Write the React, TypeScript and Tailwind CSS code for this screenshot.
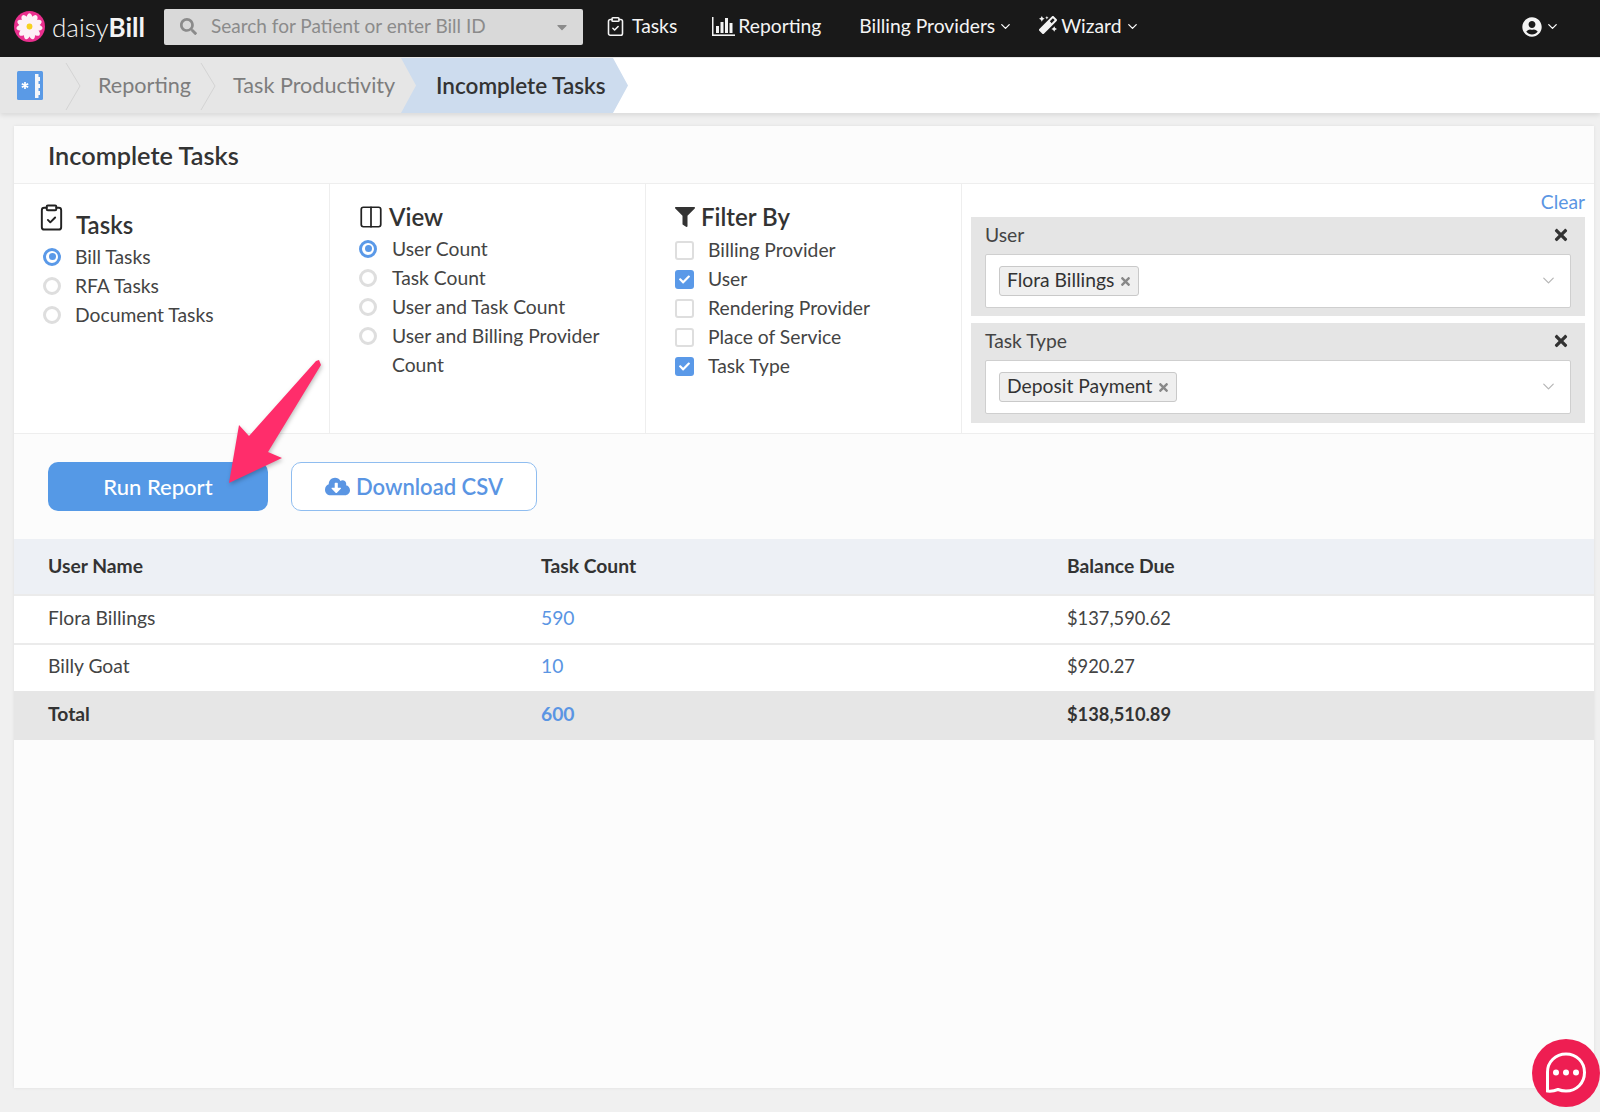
import React from "react";
import { ChevronDown, ClipboardCheck, Columns2 } from "lucide-react";
import { FaSearch, FaFilter, FaTimes, FaCloudDownloadAlt, FaCheck, FaMagic, FaUserCircle, FaCaretDown } from "react-icons/fa";

function Flower({ size = 32 }: { size?: number }) {
  const petals = Array.from({ length: 11 }, (_, i) => (i * 360) / 11);
  return (
    <svg width={size} height={size} viewBox="0 0 32 32">
      <circle cx="16" cy="16" r="16" fill="#ea2f8e" />
      {petals.map((a) => (
        <ellipse key={a} cx="16" cy="8" rx="3.200" ry="5.600" fill="#fdf1f6" transform={`rotate(${a} 16 16)`} />
      ))}
      <circle cx="16" cy="16" r="3" fill="#f6d21f" />
    </svg>
  );
}

function NavChevron() {
  return <ChevronDown size={15} strokeWidth={2} className="text-white" />;
}

function ReportIcon() {
  return (
    <svg width="23" height="19" viewBox="0 0 23 19" fill="#f4f4f4">
      <rect x="0" y="0" width="1.500" height="19" />
      <rect x="0" y="17.400" width="23" height="1.600" />
      <rect x="4" y="9" width="3" height="7" />
      <rect x="8.500" y="5" width="3" height="11" />
      <rect x="13" y="1" width="3" height="15" />
      <rect x="17.500" y="6" width="3" height="10" />
    </svg>
  );
}

function HomeIcon() {
  return (
    <svg width="26" height="29" viewBox="0 0 26 29">
      <rect width="26" height="29" rx="1.500" fill="#5a9ae6" />
      <path d="M18 3h3.500v3h1.500v4h-1.500v3h1.500v4h-1.500v3h1.500v4h-1.500v3H18z" fill="#f4f6fa" />
      <path d="M8 11v7M4.800 12.700l6.400 3.600M11.200 12.700l-6.400 3.600" stroke="#fff" strokeWidth="1.700" />
    </svg>
  );
}

function CrumbSep() {
  return (
    <svg width="16" height="56" viewBox="0 0 16 56" fill="none" className="shrink-0">
      <path d="M1 5 L15 28 L1 52" stroke="#d4d4d4" strokeWidth="1" />
    </svg>
  );
}

function Radio({ on }: { on?: boolean }) {
  return on ? (
    <span className="w-[18px] h-[18px] shrink-0 rounded-full border-[3px] border-[#5a99e8] bg-white flex items-center justify-center">
      <span className="w-[7px] h-[7px] rounded-full bg-[#5a99e8]" />
    </span>
  ) : (
    <span className="w-[18px] h-[18px] shrink-0 rounded-full border-[3px] border-[#dedede] bg-white" />
  );
}

function Check({ on }: { on?: boolean }) {
  return on ? (
    <span className="w-[19px] h-[19px] shrink-0 rounded-[3px] bg-[#5a99e8] flex items-center justify-center">
      <FaCheck size={11} className="text-white" />
    </span>
  ) : (
    <span className="w-[19px] h-[19px] shrink-0 rounded-[3px] border-2 border-[#dedede] bg-white" />
  );
}

function RadioRow({ label, on, gap }: { label: string; on?: boolean; gap: string }) {
  return (
    <div className={`flex items-start ${gap} leading-[29px] text-[19.300px] text-[#444]`}>
      <span className="h-[29px] flex items-center">
        <Radio on={on} />
      </span>
      <span>{label}</span>
    </div>
  );
}

function CheckRow({ label, on }: { label: string; on?: boolean }) {
  return (
    <div className="flex items-center gap-[14px] h-[29px] text-[19.300px] text-[#444]">
      <Check on={on} />
      <span className="-mt-[1px]">{label}</span>
    </div>
  );
}

function FilterPanel({ label, tag, cls, selCls }: { label: string; tag: string; cls: string; selCls: string }) {
  return (
    <div className={`bg-[#e5e5e5] pl-[14px] pr-[14px] ${cls}`}>
      <div className="flex items-center justify-between h-[36.500px] pr-[1px]">
        <span className="text-[19.300px] text-[#444]">{label}</span>
        <FaTimes size={18} className="text-[#333]" />
      </div>
      <div className={`bg-white border border-[#cfcfcf] rounded-[2px] flex items-center justify-between pl-[13px] pr-[12px] ${selCls}`}>
        <span className="h-[30px] inline-flex items-center gap-[5px] pl-[7px] pr-[6px] rounded-[3px] border border-[#c9c9c9] bg-[#efefef] text-[19.300px] text-[#333]">
          {tag}
          <FaTimes size={13} className="text-[#888] mt-[2px]" />
        </span>
        <ChevronDown size={19} strokeWidth={1.500} className="text-[#b5b5b5]" />
      </div>
    </div>
  );
}

function TableRow({ a, b, c, cls, cCls }: { a: string; b: string; c: string; cls: string; cCls?: string }) {
  return (
    <div className={`grid grid-cols-[493px_526px_1fr] items-center pl-[34px] text-[19.300px] ${cls}`}>
      <span>{a}</span>
      <span className={b === "Task Count" ? "" : "text-[#5a95e3]"}>{b}</span>
      <span className={cCls}>{c}</span>
    </div>
  );
}

export default function App() {
  return (
    <div className="relative w-[1600px] h-[1112px] overflow-hidden bg-[#f0f0f0] [font-family:Lato,'Liberation_Sans',sans-serif] text-[#333]">
      {/* top nav */}
      <nav className="h-[57px] bg-[#191919] flex items-center pb-[4px] text-[#f4f4f4] text-[19.300px]">
        <div className="ml-[14px] flex items-center">
          <Flower size={31} />
          <span className="ml-[7px] text-[26px] font-light leading-none">
            daisy<span className="font-bold">Bill</span>
          </span>
        </div>
        <div className="ml-[19px] w-[419px] h-[36px] rounded-[2px] bg-[#d9d9d9] flex items-center pl-[16px] pr-[13px] text-[#8b8b8b]">
          <FaSearch size={17} className="text-[#8b8b8b]" />
          <span className="ml-[14px] flex-1 text-[19px]">Search for Patient or enter Bill ID</span>
          <FaCaretDown size={16} className="text-[#8b8b8b]" />
        </div>
        <div className="ml-[22px] flex items-center gap-[6px]">
          <ClipboardCheck size={21} strokeWidth={1.800} />
          <span>Tasks</span>
        </div>
        <div className="ml-[35px] flex items-center gap-[3px]">
          <ReportIcon />
          <span>Reporting</span>
        </div>
        <div className="ml-[38px] flex items-center gap-[3px]">
          <span>Billing Providers</span>
          <NavChevron />
        </div>
        <div className="ml-[26px] flex items-center gap-[4px]">
          <FaMagic size={18} className="mb-[3px]" />
          <span>Wizard</span>
          <NavChevron />
        </div>
        <div className="ml-auto mr-[40px] flex items-center gap-[3px]">
          <FaUserCircle size={20} />
          <NavChevron />
        </div>
      </nav>

      {/* breadcrumb */}
      <div className="h-[56px] bg-white flex shadow-[0_2px_5px_rgba(0,0,0,0.1)] relative border-t border-[#e8e8e8]">
        <div className="w-[418px] bg-[#e6e6e6] flex items-center text-[21.600px] text-[#7d7d7d]">
          <span className="ml-[17px]"><HomeIcon /></span>
          <span className="ml-[22px]"><CrumbSep /></span>
          <span className="ml-[17px]">Reporting</span>
          <span className="ml-[9px]"><CrumbSep /></span>
          <span className="ml-[17px]">Task Productivity</span>
        </div>
        <div className="-ml-[17px] w-[227px] bg-[#cddcee] [clip-path:polygon(0_0,212px_0,227px_50%,212px_100%,0_100%,15px_50%)] flex items-center pl-[35px] text-[22.500px] font-semibold text-[#333] whitespace-nowrap">
          Incomplete Tasks
        </div>
      </div>

      {/* panel */}
      <main className="ml-[14px] mr-[6px] mt-[13px] h-[962px] bg-[#fcfcfc] shadow-[0_0_3px_rgba(0,0,0,0.08)] flex flex-col">
        <div className="h-[58px] flex items-center pl-[34px] pt-[2px] text-[25.300px] font-semibold text-[#333] border-b border-[#eeeeee]">
          Incomplete Tasks
        </div>

        <div className="h-[250px] flex border-b border-[#eeeeee] bg-white">
          <div className="w-[316px] border-r border-[#eeeeee] pl-[29px] pt-[19px]">
            <div className="flex items-start gap-[10px] h-[39px] -ml-[6px]">
              <ClipboardCheck size={29} strokeWidth={1.600} className="text-[#222]" />
              <span className="text-[24px] font-semibold mt-[4px]">Tasks</span>
            </div>
            <RadioRow label="Bill Tasks" on gap="gap-[14px]" />
            <RadioRow label="RFA Tasks" gap="gap-[14px]" />
            <RadioRow label="Document Tasks" gap="gap-[14px]" />
          </div>

          <div className="w-[316px] border-r border-[#eeeeee] pl-[29px] pr-[30px] pt-[15px]">
            <div className="flex items-center gap-[5px] h-[35px] -ml-[1px]">
              <Columns2 size={26} strokeWidth={1.600} className="text-[#222]" />
              <span className="text-[24px] font-semibold">View</span>
            </div>
            <RadioRow label="User Count" on gap="gap-[15px]" />
            <RadioRow label="Task Count" gap="gap-[15px]" />
            <RadioRow label="User and Task Count" gap="gap-[15px]" />
            <RadioRow label="User and Billing Provider Count" gap="gap-[15px]" />
          </div>

          <div className="w-[316px] border-r border-[#eeeeee] pl-[29px] pt-[14px]">
            <div className="flex items-center gap-[6px] h-[38px]">
              <FaFilter size={20} className="text-[#333]" />
              <span className="text-[24px] font-semibold">Filter By</span>
            </div>
            <CheckRow label="Billing Provider" />
            <CheckRow label="User" on />
            <CheckRow label="Rendering Provider" />
            <CheckRow label="Place of Service" />
            <CheckRow label="Task Type" on />
          </div>

          <div className="flex-1 pl-[9px] pr-[9px] flex flex-col">
            <div className="h-[33px] pt-[3px] flex items-center justify-end text-[19.300px] text-[#5a95e3]">Clear</div>
            <FilterPanel label="User" tag="Flora Billings" cls="h-[99px]" selCls="h-[54px]" />
            <FilterPanel label="Task Type" tag="Deposit Payment" cls="h-[100px] mt-[7px]" selCls="h-[54px]" />
          </div>
        </div>

        <div className="h-[105px] flex items-start pl-[34px] pt-[28px] gap-[23px]">
          <button className="w-[220px] h-[49px] rounded-[10px] bg-[#5599e6] text-white text-[22px] font-medium">
            Run Report
          </button>
          <button className="w-[246px] h-[49px] rounded-[10px] border border-[#8fbdf0] bg-white text-[#5a95e3] text-[22px] font-semibold flex items-center justify-center gap-[6px]">
            <FaCloudDownloadAlt size={25} />
            Download CSV
          </button>
        </div>

        <TableRow a="User Name" b="Task Count" c="Balance Due" cls="h-[55px] bg-[#edf0f5] font-bold text-[#333]" />
        <TableRow a="Flora Billings" b="590" c="$137,590.62" cCls="text-[18.300px]" cls="h-[49px] pb-[2px] bg-white border-t-2 border-[#ebebeb] text-[#444]" />
        <TableRow a="Billy Goat" b="10" c="$920.27" cCls="text-[18.300px]" cls="h-[48px] pb-[3px] bg-white border-t-2 border-[#ebebeb] text-[#444]" />
        <TableRow a="Total" b="600" c="$138,510.89" cCls="text-[18.300px]" cls="h-[49px] pb-[2px] bg-[#e6e6e6] font-bold text-[#333]" />
      </main>

      {/* annotation arrow */}
      <svg className="absolute left-0 top-0 pointer-events-none [filter:drop-shadow(1px_2px_2px_rgba(0,0,0,0.25))]" width="340" height="500" viewBox="0 0 340 500">
        <path d="M319 360 L321 365 L268 452 L282 458 L229 483 L239 425 L249 436 L316 361 Z" fill="#ff2d6b" />
      </svg>

      {/* chat bubble */}
      <div className="absolute left-[1532px] top-[1039px] w-[68px] h-[68px] rounded-full bg-[#ee1e52] flex items-center justify-center">
        <svg width="46" height="46" viewBox="0 0 46 46" fill="none">
          <path d="M23 4C12.500 4 4.500 12 4.500 22c0 4.500 0 13 0 19 4 .5 8-.5 10.500-1.500 2.500 1 5 1.500 8 1.500 10.500 0 18.500-8 18.500-18.500S33.500 4 23 4Z" stroke="#fff" strokeWidth="3" />
          <circle cx="13" cy="22.500" r="3" fill="#fff" />
          <circle cx="23" cy="22.500" r="3" fill="#fff" />
          <circle cx="33" cy="22.500" r="3" fill="#fff" />
        </svg>
      </div>
    </div>
  );
}
